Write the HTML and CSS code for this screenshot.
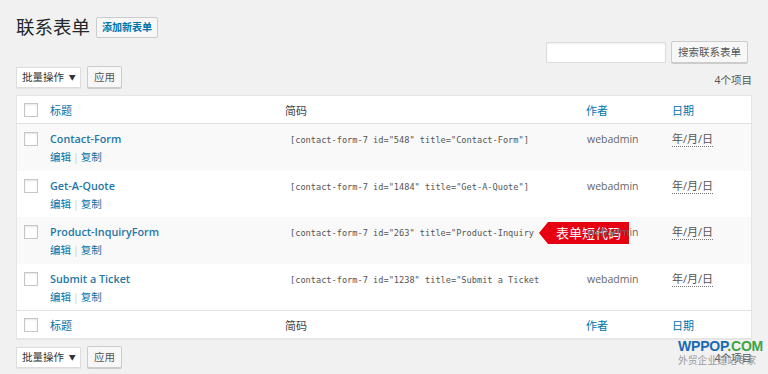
FILE: index.html
```html
<!DOCTYPE html>
<html lang="zh-CN">
<head>
<meta charset="utf-8">
<title>联系表单</title>
<link rel="stylesheet" href="styles.css">
</head>
<body>
<div class="wrap">
  <div class="head">
    <h1 class="page-title">联系表单</h1>
    <a class="add-new">添加新表单</a>
  </div>
  <div class="search-row">
    <input class="search-input" type="text">
    <button class="btn">搜索联系表单</button>
  </div>
  <div class="tablenav">
    <div class="bulk">批量操作 <span class="caret">▼</span></div>
    <button class="btn">应用</button>
    <span class="count">4个项目</span>
  </div>
  <div class="table">
    <div class="row row-head">
      <div class="cell c-check"><span class="box"></span></div>
      <div class="cell c-title"><a class="th-link">标题</a></div>
      <div class="cell c-code th-plain">简码</div>
      <div class="cell c-author"><a class="th-link">作者</a></div>
      <div class="cell c-date"><a class="th-link">日期</a></div>
    </div>
    <div class="row alt">
      <div class="cell c-check"><span class="box"></span></div>
      <div class="cell c-title"><a class="row-title">Contact-Form</a><div class="actions"><a>编辑</a><span class="sep">|</span><a>复制</a></div></div>
      <div class="cell c-code"><code class="sc">[contact-form-7 id="548" title="Contact-Form"]</code></div>
      <div class="cell c-author author">webadmin</div>
      <div class="cell c-date"><abbr class="date">年/月/日</abbr></div>
    </div>
    <div class="row">
      <div class="cell c-check"><span class="box"></span></div>
      <div class="cell c-title"><a class="row-title">Get-A-Quote</a><div class="actions"><a>编辑</a><span class="sep">|</span><a>复制</a></div></div>
      <div class="cell c-code"><code class="sc">[contact-form-7 id="1484" title="Get-A-Quote"]</code></div>
      <div class="cell c-author author">webadmin</div>
      <div class="cell c-date"><abbr class="date">年/月/日</abbr></div>
    </div>
    <div class="row alt">
      <div class="cell c-check"><span class="box"></span></div>
      <div class="cell c-title"><a class="row-title">Product-InquiryForm</a><div class="actions"><a>编辑</a><span class="sep">|</span><a>复制</a></div></div>
      <div class="cell c-code"><code class="sc">[contact-form-7 id="263" title="Product-Inquiry</code><span class="tag">表单短代码</span></div>
      <div class="cell c-author author">webadmin</div>
      <div class="cell c-date"><abbr class="date">年/月/日</abbr></div>
    </div>
    <div class="row">
      <div class="cell c-check"><span class="box"></span></div>
      <div class="cell c-title"><a class="row-title">Submit a Ticket</a><div class="actions"><a>编辑</a><span class="sep">|</span><a>复制</a></div></div>
      <div class="cell c-code"><code class="sc">[contact-form-7 id="1238" title="Submit a Ticket</code></div>
      <div class="cell c-author author">webadmin</div>
      <div class="cell c-date"><abbr class="date">年/月/日</abbr></div>
    </div>
    <div class="row row-foot">
      <div class="cell c-check"><span class="box"></span></div>
      <div class="cell c-title"><a class="th-link">标题</a></div>
      <div class="cell c-code th-plain">简码</div>
      <div class="cell c-author"><a class="th-link">作者</a></div>
      <div class="cell c-date"><a class="th-link">日期</a></div>
    </div>
  </div>
  <div class="tablenav bottom">
    <div class="bulk">批量操作 <span class="caret">▼</span></div>
    <button class="btn">应用</button>
    <span class="count">4个项目</span>
  </div>
</div>
<div class="watermark">
  <div class="wm-logo"><span class="wm-blue">WPPOP</span><span class="wm-green">.COM</span></div>
  <div class="wm-sub">外贸企业建站专家</div>
</div>
</body>
</html>
```

FILE: styles.css
```css
html, body {
  margin: 0;
  padding: 0;
  background: #f1f1f1;
  width: 768px;
  height: 374px;
  overflow: hidden;
  font-family: "Open Sans", "Noto Sans CJK SC", sans-serif;
  color: #444;
  font-size: 11px;
}
.wrap {
  padding: 15px 16px 0 16px;
  position: relative;
}
.head {
  display: flex;
  align-items: center;
  height: 24px;
  gap: 6px;
}
.page-title {
  margin: 0;
  font-size: 18.5px;
  font-weight: 400;
  color: #23282d;
  line-height: 24px;
}
.add-new {
  display: inline-block;
  height: 19px;
  line-height: 19px;
  padding: 0 5px;
  border: 1px solid #ccc;
  border-radius: 2px;
  background: #f7f7f7;
  color: #0073aa;
  font-size: 10px;
  font-weight: 600;
}
.search-row {
  display: flex;
  justify-content: flex-end;
  gap: 5px;
  margin-top: 2px;
  padding-right: 4px;
  height: 22px;
}
.search-input {
  box-sizing: border-box;
  width: 120px;
  height: 21px;
  margin: 1px 0 0;
  border: 1px solid #ddd;
  background: #fff;
  box-shadow: inset 0 1px 2px rgba(0,0,0,.07);
  padding: 0;
}
.btn {
  box-sizing: border-box;
  height: 22px;
  padding: 0 6px;
  border: 1px solid #ccc;
  border-radius: 2px;
  background: #f7f7f7;
  box-shadow: 0 1px 0 #ccc;
  color: #555;
  font-family: "Open Sans", "Noto Sans CJK SC", sans-serif;
  font-size: 10.5px;
  line-height: 20px;
}
.tablenav {
  display: flex;
  align-items: center;
  gap: 6px;
  margin-top: 3px;
  height: 22px;
  margin-bottom: 7px;
}
.bulk {
  box-sizing: border-box;
  width: 65px;
  height: 21px;
  line-height: 19px;
  border: 1px solid #ddd;
  background: #fff;
  padding-left: 5px;
  color: #333;
  font-size: 10.5px;
  box-shadow: 0 1px 1px rgba(0,0,0,.04);
}
.caret {
  font-size: 7px;
  vertical-align: 1px;
  margin-left: 2px;
}
.count {
  margin-left: auto;
  color: #555;
  font-size: 10.5px;
  padding-top: 4px;
}
.tablenav.bottom {
  margin-top: 7px;
}
.tablenav.bottom .count {
  padding-top: 0;
}
.table {
  background: #fff;
  border: 1px solid #e5e5e5;
  box-shadow: 0 1px 1px rgba(0,0,0,.04);
}
.row {
  display: grid;
  grid-template-columns: 33px 235px 301px 86px 1fr;
  height: 46.5px;
  background: #fff;
}
.row.alt {
  background: #f9f9f9;
}
.row-head, .row-foot {
  height: 27px;
  align-items: center;
}
.row-head {
  border-bottom: 1px solid #e1e1e1;
}
.row-foot {
  border-top: 1px solid #e1e1e1;
}
.cell {
  position: relative;
  min-width: 0;
}
.row:not(.row-head):not(.row-foot) .cell {
  padding-top: 7px;
}
.c-check {
  padding-left: 7px;
}
.box {
  display: block;
  box-sizing: border-box;
  width: 14px;
  height: 14px;
  border: 1px solid #c3c7cb;
  background: #fff;
  box-shadow: inset 0 1px 2px rgba(0,0,0,.1);
}
.row:not(.row-head):not(.row-foot) .box {
  margin-top: 1px;
}
.th-link {
  color: #0073aa;
  font-size: 11px;
}
.th-plain {
  color: #444;
  font-size: 11px;
}
.row-title {
  display: block;
  color: #1e77a6;
  font-weight: 600;
  font-size: 10.8px;
  line-height: 16px;
}
.actions {
  margin-top: 3px;
  font-size: 10.5px;
  line-height: 14px;
  color: #0073aa;
}
.actions a {
  color: #0073aa;
}
.sep {
  color: #ccc;
  margin: 0 2px;
}
.sc {
  display: inline-block;
  margin-left: 5px;
  margin-top: 3px;
  font-family: "DejaVu Sans Mono", "Liberation Mono", monospace;
  font-size: 8.65px;
  color: #555;
  white-space: nowrap;
}
.author {
  color: #666;
  font-size: 10.5px;
  line-height: 16px;
  padding-left: 1px;
}
.date {
  color: #555;
  font-size: 11px;
  line-height: 16px;
  text-decoration: none;
  border-bottom: 1px dotted #777;
}
.tag {
  position: absolute;
  left: 263px;
  top: 5px;
  height: 22px;
  line-height: 22px;
  padding: 0 8px 0 8px;
  background: #e60012;
  color: #fff;
  font-size: 13px;
  font-family: "Noto Sans CJK SC", sans-serif;
  white-space: nowrap;
}
.tag::before {
  content: "";
  position: absolute;
  left: -9px;
  top: 0;
  border-style: solid;
  border-width: 11px 9px 11px 0;
  border-color: transparent #e60012 transparent transparent;
}
.watermark {
  position: absolute;
  left: 678px;
  top: 339px;
  width: 82px;
}
.wm-logo {
  font-family: "Liberation Sans", Arial, sans-serif;
  font-weight: 700;
  font-size: 14px;
  line-height: 14px;
  letter-spacing: -0.2px;
}
.wm-blue {
  color: #1a6ab3;
}
.wm-green {
  color: #3da447;
}
.wm-sub {
  margin-top: 1px;
  font-family: "Noto Sans CJK SC", sans-serif;
  font-size: 9.8px;
  line-height: 13px;
  color: #888;
  opacity: 0.8;
}
```
